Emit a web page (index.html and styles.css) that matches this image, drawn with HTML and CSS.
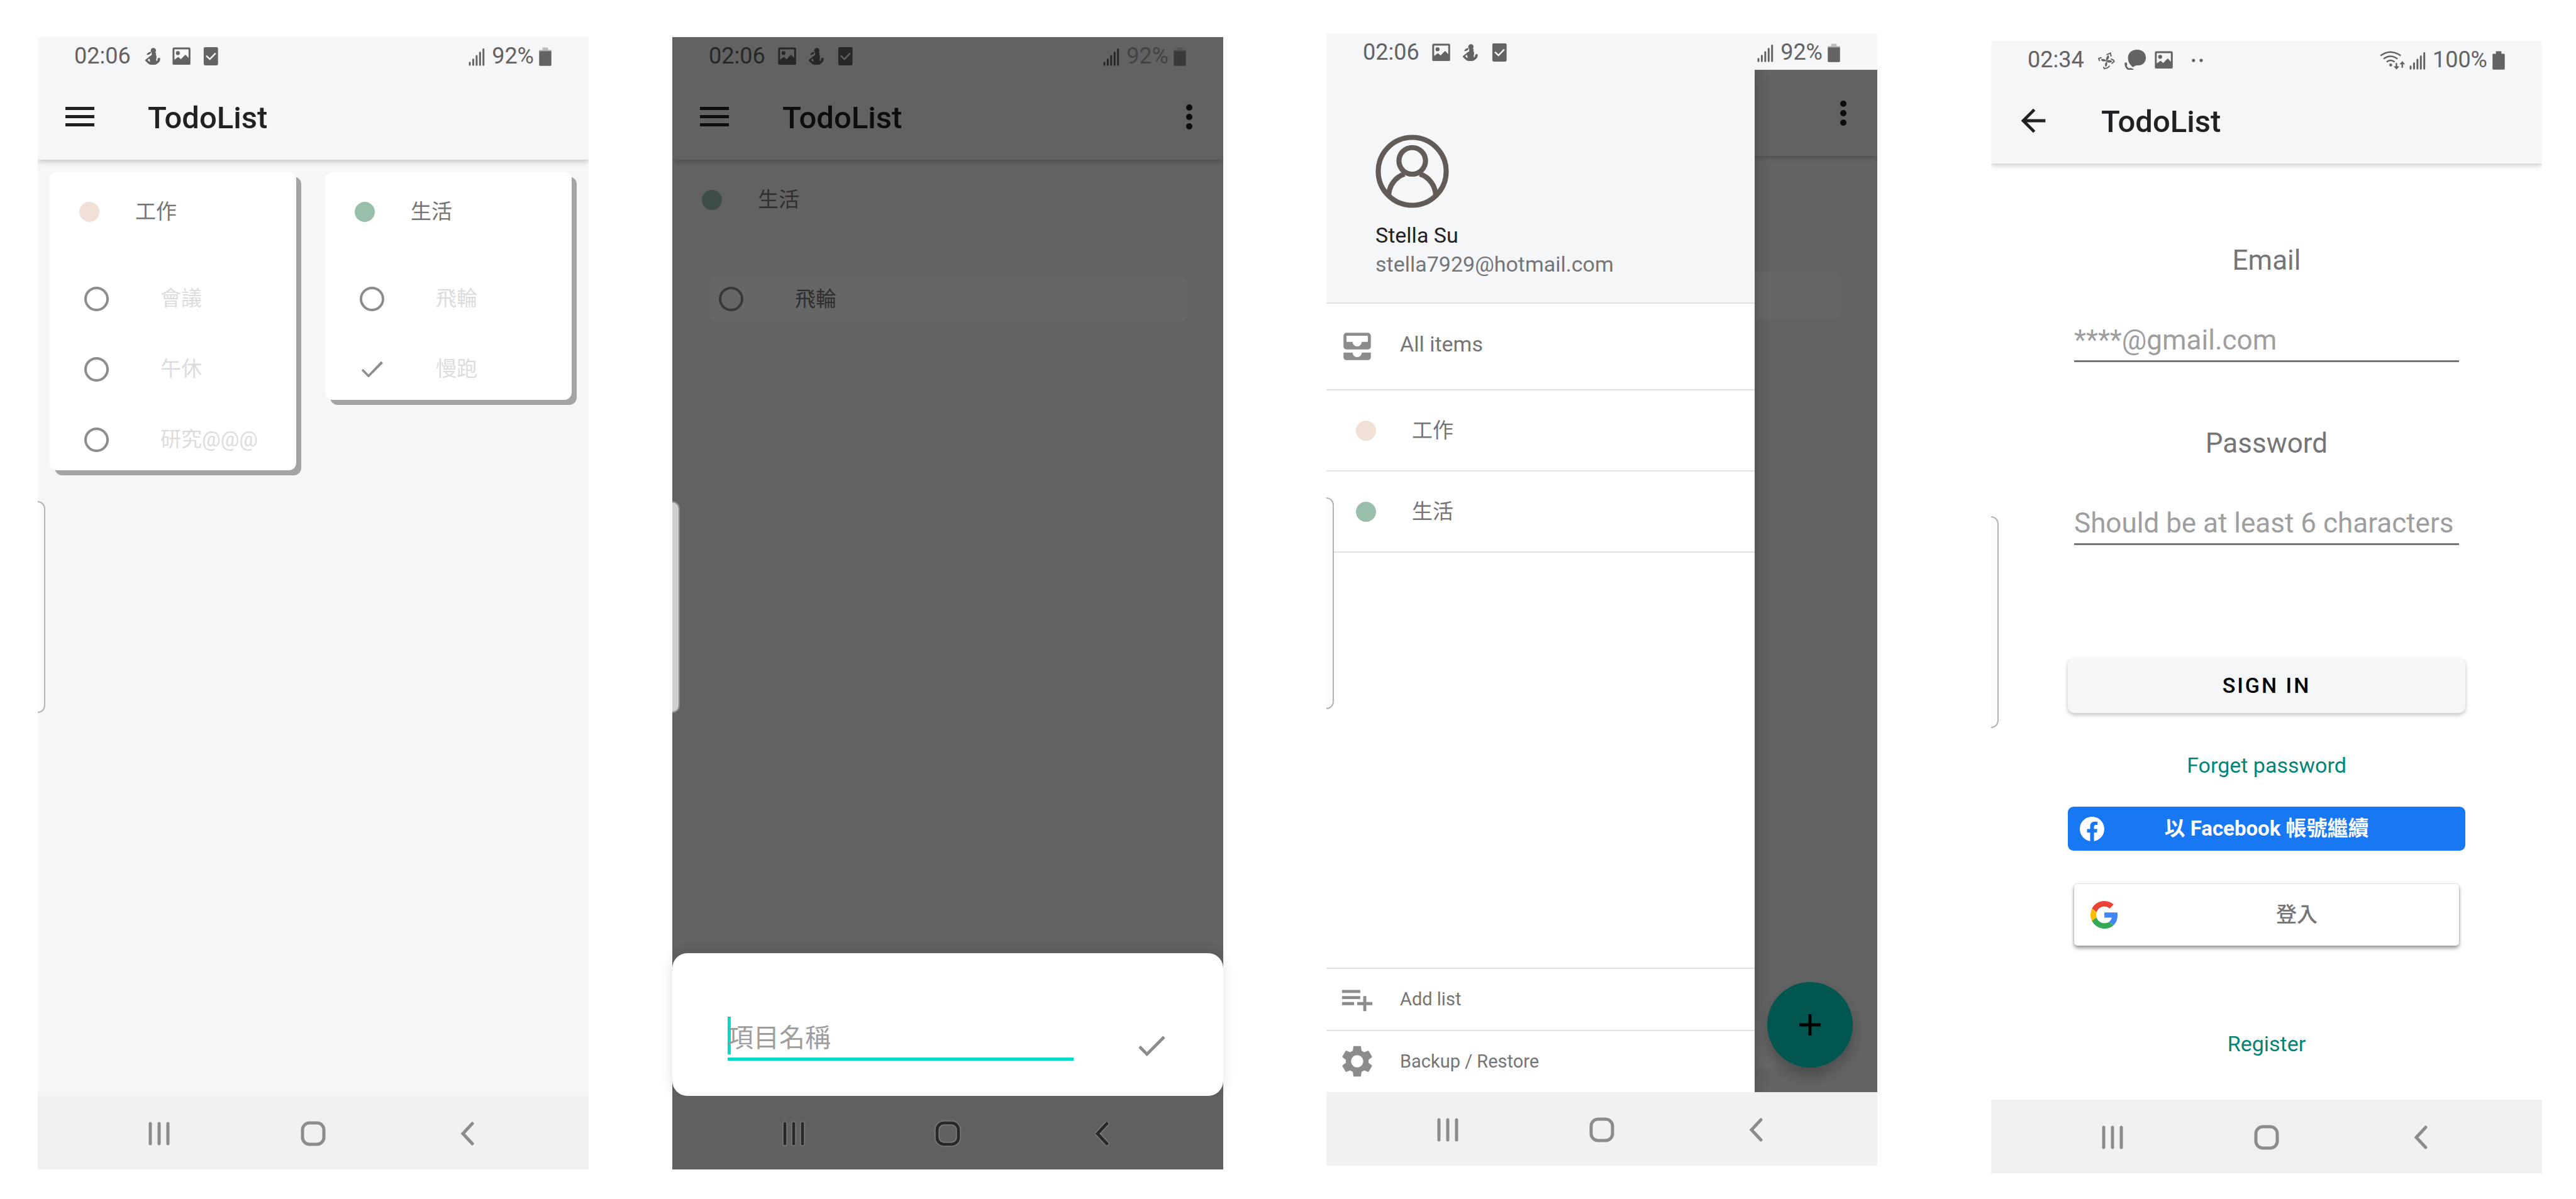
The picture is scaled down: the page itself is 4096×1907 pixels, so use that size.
FILE: index.html
```html
<!DOCTYPE html>
<html lang="zh-Hant">
<head>
<meta charset="utf-8">
<meta name="viewport" content="width=device-width, initial-scale=1">
<title>TodoList</title>
<link rel="stylesheet" href="styles.css">
</head>
<body>
<svg class="sprite" aria-hidden="true">
  <symbol id="i-person" viewBox="32 24 170 118">
    <circle cx="120" cy="51" r="15.500"/>
    <path d="M106 58c-10 1-20 6-26 18 10 3 20-2 27-12z"/>
    <path fill-rule="evenodd" d="M110 62h21l7 6-4 5c6 10 6 22 2 32l3 9c3-2 5-6 6-10-1-4 1-8 7-10 3-1 8 1 8 4 1 10-3 18-9 24-10 8-14 13-28 13h-16c-13 0-22-12-33-22-3-3-3-5 0-8l24-19c5-4 12-4 12-10zM95 98l-9 9 14 11c1-7 0-13-5-20z"/>
  </symbol>
  <symbol id="i-image" viewBox="203 24 170 118">
    <path fill-rule="evenodd" d="M242 33h89q8 0 8 8v86q0 8-8 8h-89q-8 0-8-8V41q0-8 8-8zM245 44v61l20-15q3-2 6 1l12 11 23-24q4-3 7 0l15 17V44z"/>
    <circle cx="265" cy="66" r="11.500"/>
  </symbol>
  <symbol id="i-task" viewBox="371 24 170 118">
    <rect x="415" y="31" width="84" height="107" rx="8"/>
    <path d="M430 82l21 20 34-35" fill="none" stroke="#f5f6f8" stroke-width="9"/>
  </symbol>
  <symbol id="i-fan" viewBox="26 18 170 118">
    <path d="M110 84c0-14 2-28 14-33 8 8 5 22-14 33zM110 84c14-7 26-8 36 3-10 10-24 8-36-3zM114 86c6 14 4 26-5 33-8-8-6-22 5-33zM112 84c-12 4-28 4-32-9 12-5 24-3 32 9z"/>
    <path d="M113 48l23-10 4 20M138 72l16 8 4 7-16 13M132 113l-14 12-18 4-6-10M84 64l-17 6 5 15" fill="none" stroke="currentColor" stroke-width="7"/>
  </symbol>
  <symbol id="i-chat" viewBox="197 18 170 118">
    <path d="M293 18c32 0 52 20 52 46s-16 46-44 46c-12 0-18 1-24 5l-7 6c-12-8-30-26-30-54 0-30 22-49 53-49z"/>
    <path d="M220 98q6-8 13-3l3 12-4 6q5 10 14 15l7-3 18 6q4 6-1 12c-30 4-51-20-50-45z"/>
  </symbol>
  <symbol id="i-dots" viewBox="536 18 170 118">
    <circle cx="624" cy="81" r="9.500"/><circle cx="669" cy="81" r="9.500"/>
  </symbol>
  <symbol id="i-wifi" viewBox="36 18 151 118">
    <path d="M40 53q59-43 118 0M58 72q41-31 82 0M76 90q23-18 47 0" fill="none" stroke="currentColor" stroke-width="9"/>
    <circle cx="100" cy="108" r="8.500"/>
    <path d="M129 96h9v20h13l-17 18-17-18h12zM163 124h9v-20h12l-16-19-17 19h12z"/>
  </symbol>
  <symbol id="i-signal" viewBox="207 18 103 118">
    <path d="M218 117v13M238 98v32M258 77v53M278 58v72M298 38v92" fill="none" stroke="currentColor" stroke-width="11" stroke-linecap="round"/>
  </symbol>
  <symbol id="i-battery" viewBox="701 18 74 118">
    <path d="M722 27h32v15h-32z" opacity=".4"/><path d="M702 42h72v6h-72z" opacity=".5"/>
    <path d="M702 48h72v82q0 5-5 5h-62q-5 0-5-5z"/>
  </symbol>
  <symbol id="i-battery-full" viewBox="701 18 74 118">
    <path d="M722 27h32v15h15q5 0 5 5v83q0 5-5 5h-62q-5 0-5-5V47q0-5 5-5h15z"/>
  </symbol>
  <symbol id="i-menu" viewBox="0 0 46 31"><path d="M0 0h46v5H0zM0 13h46v5H0zM0 26h46v5H0z"/></symbol>
  <symbol id="i-more" viewBox="0 0 10 40"><circle cx="5" cy="5" r="5"/><circle cx="5" cy="20" r="5"/><circle cx="5" cy="35" r="5"/></symbol>
  <symbol id="i-back" viewBox="0 0 24 24"><path d="M20 11H7.830l5.590-5.590L12 4l-8 8 8 8 1.410-1.410L7.830 13H20v-2z"/></symbol>
  <symbol id="i-check" viewBox="0 0 24 24"><path d="M9 16.200L4.800 12l-1.400 1.400L9 19 21 7l-1.400-1.400L9 16.200z"/></symbol>
  <symbol id="i-plus" viewBox="0 0 24 24"><path d="M19 13h-6v6h-2v-6H5v-2h6V5h2v6h6v2z"/></symbol>
  <symbol id="i-inbox" viewBox="0 0 24 24"><path d="M19 3H5c-1.100 0-2 .9-2 2v7c0 1.100.9 2 2 2h14c1.100 0 2-.9 2-2V5c0-1.100-.9-2-2-2zm0 6h-4c0 1.620-1.380 3-3 3s-3-1.380-3-3H5V5h14v4zm-4 7h6v3c0 1.100-.9 2-2 2H5c-1.100 0-2-.9-2-2v-3h6c0 1.660 1.340 3 3 3s3-1.340 3-3z"/></symbol>
  <symbol id="i-addlist" viewBox="0 0 24 24"><path d="M14 10H2v2h12v-2zm0-4H2v2h12V6zm4 8v-4h-2v4h-4v2h4v4h2v-4h4v-2h-4zM2 16h8v-2H2v2z"/></symbol>
  <symbol id="i-gear" viewBox="0 0 24 24"><path d="M19.430 12.980c.04-.32.070-.64.070-.98s-.03-.66-.07-.98l2.110-1.650c.19-.15.240-.42.120-.64l-2-3.460c-.12-.22-.39-.3-.61-.22l-2.490 1c-.52-.4-1.080-.73-1.690-.98l-.38-2.650C14.460 2.180 14.250 2 14 2h-4c-.25 0-.46.180-.49.420l-.38 2.650c-.61.250-1.170.59-1.690.98l-2.490-1c-.23-.09-.49 0-.61.220l-2 3.460c-.13.220-.07.490.120.640l2.110 1.650c-.04.320-.07.650-.07.980s.030.660.070.980l-2.110 1.650c-.19.150-.24.420-.12.640l2 3.460c.12.220.39.300.61.220l2.490-1c.52.400 1.080.730 1.690.980l.38 2.650c.03.240.240.420.490.420h4c.25 0 .46-.18.490-.42l.38-2.650c.61-.25 1.170-.59 1.690-.98l2.490 1c.23.090.490 0 .61-.22l2-3.460c.12-.22.070-.49-.12-.64l-2.110-1.650zM12 16c-2.200 0-4-1.800-4-4s1.800-4 4-4 4 1.800 4 4-1.800 4-4 4z"/></symbol>
  <symbol id="i-recents" viewBox="0 0 34 38"><path d="M3 3v32M17 3v32M31 3v32" fill="none" stroke="currentColor" stroke-width="5" stroke-linecap="round"/></symbol>
  <symbol id="i-home" viewBox="0 0 40 40"><rect x="3" y="3" width="34" height="34" rx="11" fill="none" stroke="currentColor" stroke-width="5"/></symbol>
  <symbol id="i-navback" viewBox="0 0 22 38"><path d="M19 3L4 19l15 16" fill="none" stroke="currentColor" stroke-width="5" stroke-linecap="round"/></symbol>
</svg>

<main class="gallery">

  <!-- All lists -->
  <section class="phone phone-lists" aria-label="All lists">
    <div class="status">
      <span class="status-time">02:06</span>
      <svg class="status-icon"><use href="#i-person"/></svg>
      <svg class="status-icon"><use href="#i-image"/></svg>
      <svg class="status-icon"><use href="#i-task"/></svg>
      <svg class="status-signal"><use href="#i-signal"/></svg>
      <span class="status-level">92%</span>
      <svg class="status-battery"><use href="#i-battery"/></svg>
    </div>
    <header class="appbar">
      <button class="bar-button" type="button" aria-label="Menu"><svg class="menu-icon"><use href="#i-menu"/></svg></button>
      <h1 class="bar-title">TodoList</h1>
    </header>
    <div class="board">
      <article class="card">
        <h2 class="list-head"><span class="dot dot-peach"></span>工作</h2>
        <div class="tasks">
          <label class="task"><input class="tick" type="checkbox">會議</label>
          <label class="task"><input class="tick" type="checkbox">午休</label>
          <label class="task"><input class="tick" type="checkbox">研究@@@</label>
        </div>
      </article>
      <article class="card">
        <h2 class="list-head"><span class="dot dot-green"></span>生活</h2>
        <div class="tasks">
          <label class="task"><input class="tick" type="checkbox">飛輪</label>
          <label class="task"><input class="tick" type="checkbox" checked>慢跑</label>
        </div>
      </article>
    </div>
    <nav class="navbar" aria-label="System">
      <button class="nav-button" type="button" aria-label="Recents"><svg class="nav-recents"><use href="#i-recents"/></svg></button>
      <button class="nav-button" type="button" aria-label="Home"><svg class="nav-home"><use href="#i-home"/></svg></button>
      <button class="nav-button" type="button" aria-label="Back"><svg class="nav-back"><use href="#i-navback"/></svg></button>
    </nav>
    <span class="edge"></span>
  </section>

  <!-- New item sheet -->
  <section class="phone phone-add" aria-label="Add item">
    <div class="status">
      <span class="status-time">02:06</span>
      <svg class="status-icon"><use href="#i-image"/></svg>
      <svg class="status-icon"><use href="#i-person"/></svg>
      <svg class="status-icon"><use href="#i-task"/></svg>
      <svg class="status-signal"><use href="#i-signal"/></svg>
      <span class="status-level">92%</span>
      <svg class="status-battery"><use href="#i-battery"/></svg>
    </div>
    <header class="appbar">
      <button class="bar-button" type="button" aria-label="Menu"><svg class="menu-icon"><use href="#i-menu"/></svg></button>
      <h1 class="bar-title">TodoList</h1>
      <button class="bar-button bar-more" type="button" aria-label="More"><svg class="more-icon"><use href="#i-more"/></svg></button>
    </header>
    <div class="detail">
      <h2 class="list-head"><span class="dot dot-green"></span>生活</h2>
      <label class="task task-row"><input class="tick" type="checkbox">飛輪</label>
    </div>
    <div class="scrim"></div>
    <form class="sheet">
      <div class="sheet-field"><input class="sheet-input" type="text" placeholder="項目名稱" aria-label="項目名稱"></div>
      <button class="sheet-ok" type="button" aria-label="OK"><svg class="glyph"><use href="#i-check"/></svg></button>
    </form>
    <nav class="navbar navbar-dim" aria-label="System">
      <button class="nav-button" type="button" aria-label="Recents"><svg class="nav-recents"><use href="#i-recents"/></svg></button>
      <button class="nav-button" type="button" aria-label="Home"><svg class="nav-home"><use href="#i-home"/></svg></button>
      <button class="nav-button" type="button" aria-label="Back"><svg class="nav-back"><use href="#i-navback"/></svg></button>
    </nav>
    <span class="edge edge-dim"></span>
  </section>

  <!-- Navigation drawer -->
  <section class="phone phone-drawer" aria-label="Drawer">
    <div class="status">
      <span class="status-time">02:06</span>
      <svg class="status-icon"><use href="#i-image"/></svg>
      <svg class="status-icon"><use href="#i-person"/></svg>
      <svg class="status-icon"><use href="#i-task"/></svg>
      <svg class="status-signal"><use href="#i-signal"/></svg>
      <span class="status-level">92%</span>
      <svg class="status-battery"><use href="#i-battery"/></svg>
    </div>
    <div class="stage">
      <header class="appbar">
        <button class="bar-button bar-more" type="button" aria-label="More"><svg class="more-icon"><use href="#i-more"/></svg></button>
      </header>
      <div class="detail detail-behind">
        <div class="task-row"></div>
        <div class="task-row"></div>
      </div>
      <button class="fab" type="button" aria-label="Add"><svg class="glyph"><use href="#i-plus"/></svg></button>
      <div class="scrim"></div>
      <aside class="drawer">
        <div class="profile">
          <svg class="avatar" viewBox="0 0 144 144">
            <circle cx="72" cy="72" r="66.500"/><circle cx="72" cy="51.500" r="26"/>
            <path d="M26 121A46 46 0 0 1 57 77M87 77A46 46 0 0 1 118 121"/>
          </svg>
          <p class="profile-name">Stella Su</p>
          <p class="profile-mail">stella7929@hotmail.com</p>
        </div>
        <a class="drawer-row drawer-all" href="#all"><svg class="glyph"><use href="#i-inbox"/></svg><span class="drawer-label">All items</span></a>
        <a class="drawer-row drawer-list" href="#work"><span class="dot dot-peach"></span>工作</a>
        <a class="drawer-row drawer-list" href="#life"><span class="dot dot-green"></span>生活</a>
        <div class="drawer-foot">
          <a class="drawer-row drawer-action" href="#add"><svg class="glyph"><use href="#i-addlist"/></svg>Add list</a>
          <a class="drawer-row drawer-action" href="#backup"><svg class="glyph"><use href="#i-gear"/></svg>Backup / Restore</a>
        </div>
      </aside>
    </div>
    <nav class="navbar" aria-label="System">
      <button class="nav-button" type="button" aria-label="Recents"><svg class="nav-recents"><use href="#i-recents"/></svg></button>
      <button class="nav-button" type="button" aria-label="Home"><svg class="nav-home"><use href="#i-home"/></svg></button>
      <button class="nav-button" type="button" aria-label="Back"><svg class="nav-back"><use href="#i-navback"/></svg></button>
    </nav>
    <span class="edge"></span>
  </section>

  <!-- Sign in -->
  <section class="phone phone-login" aria-label="Sign in">
    <div class="status">
      <span class="status-time">02:34</span>
      <svg class="status-icon"><use href="#i-fan"/></svg>
      <svg class="status-icon"><use href="#i-chat"/></svg>
      <svg class="status-icon"><use href="#i-image"/></svg>
      <svg class="status-icon"><use href="#i-dots"/></svg>
      <svg class="status-wifi"><use href="#i-wifi"/></svg>
      <svg class="status-signal"><use href="#i-signal"/></svg>
      <span class="status-level">100%</span>
      <svg class="status-battery"><use href="#i-battery-full"/></svg>
    </div>
    <header class="appbar">
      <button class="bar-button" type="button" aria-label="Back"><svg class="glyph"><use href="#i-back"/></svg></button>
      <h1 class="bar-title">TodoList</h1>
    </header>
    <form class="login">
      <label class="field-label" for="email">Email</label>
      <input class="field" id="email" type="email" placeholder="****@gmail.com">
      <label class="field-label" for="password">Password</label>
      <input class="field" id="password" type="password" placeholder="Should be at least 6 characters">
      <button class="sign-in" type="button">SIGN IN</button>
      <a class="text-link" href="#forget">Forget password</a>
      <button class="facebook" type="button">
        <svg class="facebook-logo" viewBox="0 0 24 24"><path fill="#fff" d="M24 12.070C24 5.440 18.630.07 12 .07S0 5.440 0 12.070c0 5.990 4.390 10.960 10.130 11.860v-8.390H7.080v-3.470h3.050V9.430c0-3.010 1.790-4.670 4.530-4.670 1.310 0 2.690.23 2.690.23v2.950h-1.510c-1.490 0-1.960.93-1.960 1.870v2.260h3.330l-.53 3.470h-2.800v8.390C19.610 23.030 24 18.060 24 12.070z"/></svg>
        <span class="facebook-text">以 Facebook 帳號繼續</span>
      </button>
      <button class="google" type="button">
        <svg class="google-logo" viewBox="0 0 48 48">
          <path fill="#ea4335" d="M24 9.500c3.540 0 6.710 1.220 9.210 3.600l6.850-6.850C35.900 2.380 30.470 0 24 0 14.620 0 6.510 5.380 2.560 13.220l7.980 6.190C12.430 13.720 17.740 9.500 24 9.500z"/>
          <path fill="#4285f4" d="M46.980 24.550c0-1.570-.15-3.090-.38-4.550H24v9.020h12.940c-.58 2.960-2.260 5.480-4.780 7.180l7.730 6c4.510-4.180 7.090-10.360 7.090-17.650z"/>
          <path fill="#fbbc05" d="M10.530 28.590A14.500 14.500 0 0 1 9.770 24c0-1.600.27-3.140.76-4.590l-7.980-6.190A24 24 0 0 0 0 24c0 3.880.92 7.540 2.560 10.780l7.970-6.190z"/>
          <path fill="#34a853" d="M24 48c6.480 0 11.930-2.130 15.890-5.810l-7.730-6c-2.150 1.450-4.920 2.300-8.160 2.300-6.260 0-11.570-4.220-13.470-9.910l-7.980 6.190C6.510 42.620 14.620 48 24 48z"/>
        </svg>
        <span class="google-text">登入</span>
      </button>
      <a class="text-link register" href="#register">Register</a>
    </form>
    <nav class="navbar" aria-label="System">
      <button class="nav-button" type="button" aria-label="Recents"><svg class="nav-recents"><use href="#i-recents"/></svg></button>
      <button class="nav-button" type="button" aria-label="Home"><svg class="nav-home"><use href="#i-home"/></svg></button>
      <button class="nav-button" type="button" aria-label="Back"><svg class="nav-back"><use href="#i-navback"/></svg></button>
    </nav>
    <span class="edge edge-low"></span>
  </section>

</main>
</body>
</html>
```
FILE: styles.css
```css
*,
*::before {
  box-sizing: border-box;
}

body {
  margin: 0;
  background: #fff;
  color: #757575;
  font-family: Roboto, "Noto Sans CJK TC", sans-serif;
  font-size: 34px;
  line-height: 40px;
}

h1,
h2,
p {
  margin: 0;
  font-weight: 400;
}

button {
  padding: 0;
  border: 0;
  background: none;
  color: inherit;
  font: inherit;
}

a {
  color: inherit;
  text-decoration: none;
}

svg {
  display: block;
  flex: none;
  fill: currentColor;
}

.sprite {
  position: absolute;
  width: 0;
  height: 0;
}

/* Four phones side by side, with uneven gutters */
.gallery {
  display: grid;
  grid-template-columns: 60fr 876fr 133fr 876fr 164fr 876fr 181fr 876fr 54fr;
  align-items: start;
  padding-top: 53px;
}

.phone {
  position: relative;
  display: flex;
  flex-direction: column;
  grid-row: 1;
  aspect-ratio: 18 / 37;
  min-width: 0;
  background: #f5f6f8;
}

.phone-lists {
  grid-column: 2;
  margin-top: 6px;
}

.phone-add {
  grid-column: 4;
  margin-top: 6px;
}

.phone-drawer {
  grid-column: 6;
}

.phone-login {
  grid-column: 8;
  margin-top: 12px;
  background: #fff;
}

/* Status bar */
.status {
  display: flex;
  align-items: center;
  height: 58px;
  padding: 2px 59px 0 58px;
  background: #f5f6f8;
  color: #636363;
  font-size: 36px;
}

.status-time {
  margin-right: 12px;
}

.status-icon {
  width: 46px;
  height: 32px;
}

.status-signal {
  width: 28px;
  height: 32px;
  margin-left: auto;
}

.status-wifi {
  width: 41px;
  height: 32px;
  margin-left: auto;
}

.status-wifi + .status-signal {
  margin-left: 5px;
}

.status-level {
  margin: 0 8px 0 10px;
}

.status-battery {
  width: 20px;
  height: 32px;
}

.phone-add .status-level {
  color: #a8a8a8;
}

.phone-add .status-battery {
  color: #8f8f8f;
}

/* App bar */
.appbar {
  display: flex;
  align-items: center;
  height: 137px;
  padding: 0 24px 0 37px;
  background: #f5f6f8;
  box-shadow: 0 2px 9px rgba(0, 0, 0, .25);
  clip-path: inset(0 0 -20px 0);
  color: #202124;
}

.bar-button {
  display: flex;
  align-items: center;
  justify-content: center;
  width: 60px;
  height: 60px;
}

.bar-title {
  margin-left: 78px;
  padding-top: 4px;
  font-size: 49px;
  font-weight: 500;
  line-height: 58px;
}

.bar-more {
  margin-left: auto;
}

.menu-icon {
  width: 46px;
  height: 31px;
}

.more-icon {
  width: 10px;
  height: 40px;
}

.glyph {
  width: 58px;
  height: 58px;
}

/* Lists and tasks */
.board {
  display: grid;
  flex: 1;
  grid-template-columns: 1fr 1fr;
  gap: 46px;
  align-items: start;
  padding: 19px 27px 0 19px;
}

.card {
  border-radius: 12px;
  background: #fff;
  box-shadow: 8px 8px 0 #a3a4a6;
}

.list-head {
  display: flex;
  align-items: center;
  gap: 57px;
  height: 127px;
  padding-left: 47px;
  font-size: 33px;
}

.dot {
  flex: none;
  width: 32px;
  height: 32px;
  border-radius: 50%;
}

.dot-peach {
  background: #f0e0d6;
}

.dot-green {
  background: #99bfab;
}

.tasks {
  display: grid;
  gap: 14px;
  padding-top: 26px;
}

.task {
  display: flex;
  align-items: center;
  height: 98px;
  padding-left: 55px;
  color: #dcdcdc;
  font-size: 33px;
}

.tick {
  appearance: none;
  flex: none;
  width: 39px;
  height: 39px;
  margin: 0 82px 0 0;
  border: 4px solid #8c8c8c;
  border-radius: 50%;
}

.tick:checked {
  width: 47px;
  height: 47px;
  margin: 0 78px 0 -4px;
  border: 0;
  border-radius: 0;
  background: #8c8c8c;
  clip-path: polygon(18px 32px, 9px 23px, 7px 26px, 18px 37px, 41px 14px, 38px 11px);
}

.detail {
  flex: 1;
}

.task-row {
  height: 73px;
  margin: 58px 58px 0;
  padding-left: 16px;
  border-radius: 12px;
  background: #fff;
  color: #757575;
}

.detail-behind {
  display: flex;
  flex-direction: column;
  justify-content: space-between;
  height: calc(100% - 137px);
  padding: 127px 0 39px;
}

.scrim {
  position: absolute;
  inset: 0;
  background: rgba(0, 0, 0, .6);
}

/* Bottom sheet */
.sheet {
  position: relative;
  display: flex;
  align-items: flex-end;
  gap: 95px;
  padding: 101px 85px 56px 88px;
  border-radius: 24px;
  background: #fff;
  box-shadow: 0 0 20px rgba(0, 0, 0, .12);
}

.sheet-field {
  position: relative;
  flex: 1;
}

.sheet-field::before {
  content: "";
  position: absolute;
  top: 0;
  left: 0;
  width: 5px;
  height: 60px;
  background: #03dac5;
}

.sheet-input {
  position: relative;
  display: block;
  width: 100%;
  height: 70px;
  padding: 3px 0 0;
  border: 0;
  border-bottom: 5px solid #03dac5;
  outline: 0;
  background: none;
  font: inherit;
  font-size: 41px;
}

::placeholder {
  color: #9e9e9e;
  opacity: 1;
}

.sheet-ok {
  display: flex;
  align-items: center;
  height: 48px;
  color: #8c8c8c;
}

/* System navigation */
.navbar {
  position: relative;
  display: grid;
  grid-template-columns: repeat(3, 28%);
  justify-content: center;
  height: 117px;
  padding-top: 3px;
  background: #f1f1f1;
  color: #8c8c8c;
}

.navbar-dim {
  background: #606060;
  color: #282828;
}

.navbar-dim svg {
  filter: drop-shadow(0 0 1px #ccc);
}

.nav-button {
  display: flex;
  align-items: center;
  justify-content: center;
}

.nav-recents {
  width: 34px;
  height: 38px;
}

.nav-home {
  width: 40px;
  height: 40px;
}

.nav-back {
  width: 22px;
  height: 38px;
}

/* Edge panel handle, half off the left side of the screen */
.edge {
  position: absolute;
  top: 41%;
  left: 0;
  width: 12px;
  height: 337px;
  border: 2px solid #b2b5b6;
  border-left: 0;
  border-radius: 0 14px 14px 0;
  background: #fcfcfc;
}

.edge-dim {
  border-color: #8a8a8a;
  background: #cfcfcf;
}

.edge-low {
  top: 42%;
}

/* Drawer */
.stage {
  position: relative;
  flex: 1;
  overflow: hidden;
}

.drawer {
  position: absolute;
  inset: 0 22.222% 0 0;
  display: flex;
  flex-direction: column;
  background: #fff;
  box-shadow: 0 0 20px rgba(0, 0, 0, .25);
}

.profile {
  padding: 103px 78px 38px;
  border-bottom: 2px solid #e0e0e0;
  background: #f5f6f8;
  line-height: 46px;
}

.avatar {
  width: 117px;
  height: 117px;
  margin-bottom: 20px;
  fill: none;
  stroke: #635b57;
  stroke-width: 10;
}

.profile-name {
  color: #212121;
}

.drawer-row {
  display: flex;
  align-items: center;
}

.drawer-all {
  gap: 39px;
  height: 138px;
  padding-left: 20px;
  border-bottom: 2px solid #e0e0e0;
}

.drawer-label {
  padding-bottom: 8px;
}

.drawer-list {
  gap: 57px;
  height: 129px;
  padding-left: 47px;
  border-bottom: 2px solid #e0e0e0;
  font-size: 33px;
}

.drawer-foot {
  margin-top: auto;
}

.drawer-action {
  gap: 39px;
  height: 99px;
  padding-left: 20px;
  border-top: 2px solid #e0e0e0;
  font-size: 29px;
}

.drawer-row .glyph {
  color: #8c8c8c;
}

.fab {
  position: absolute;
  right: 39px;
  bottom: 39px;
  display: flex;
  align-items: center;
  justify-content: center;
  width: 136px;
  height: 136px;
  border-radius: 50%;
  background: #03dac5;
  box-shadow: 0 12px 20px rgba(0, 0, 0, .25);
  color: #000;
}

/* Sign in form */
.login {
  display: flex;
  flex: 1;
  flex-direction: column;
  padding: 128px 122px 0;
}

.field-label {
  font-size: 44px;
  line-height: 52px;
  text-align: center;
}

.field {
  height: 68px;
  margin: 68px 10px 103px;
  padding: 0;
  border: 0;
  border-bottom: 3px solid #757575;
  outline: 0;
  background: none;
  font: inherit;
  font-size: 44px;
}

.sign-in {
  height: 88px;
  margin-top: 76px;
  border-radius: 10px;
  background: #f5f6f8;
  box-shadow: 0 3px 6px rgba(0, 0, 0, .25);
  color: #000;
  font-weight: 500;
  letter-spacing: 3px;
}

.text-link {
  align-self: center;
  margin-top: 63px;
  color: #00857a;
}

.facebook {
  display: grid;
  grid-template-columns: 39px 1fr 39px;
  align-items: center;
  height: 70px;
  margin-top: 46px;
  padding: 0 19px;
  border-radius: 9px;
  background: #1877f2;
  color: #fff;
  font-size: 33px;
  font-weight: 700;
}

.facebook-logo {
  width: 39px;
  height: 39px;
}

.google {
  display: grid;
  grid-template-columns: 96px 1fr;
  align-items: center;
  justify-items: center;
  height: 98px;
  margin: 53px 10px 0;
  border-radius: 5px;
  background: #fff;
  box-shadow: 0 4px 6px rgba(0, 0, 0, .4), 0 0 3px rgba(0, 0, 0, .2);
  font-size: 33px;
  font-weight: 500;
}

.google-logo {
  width: 44px;
  height: 44px;
}

.register {
  margin-top: 136px;
}
```
